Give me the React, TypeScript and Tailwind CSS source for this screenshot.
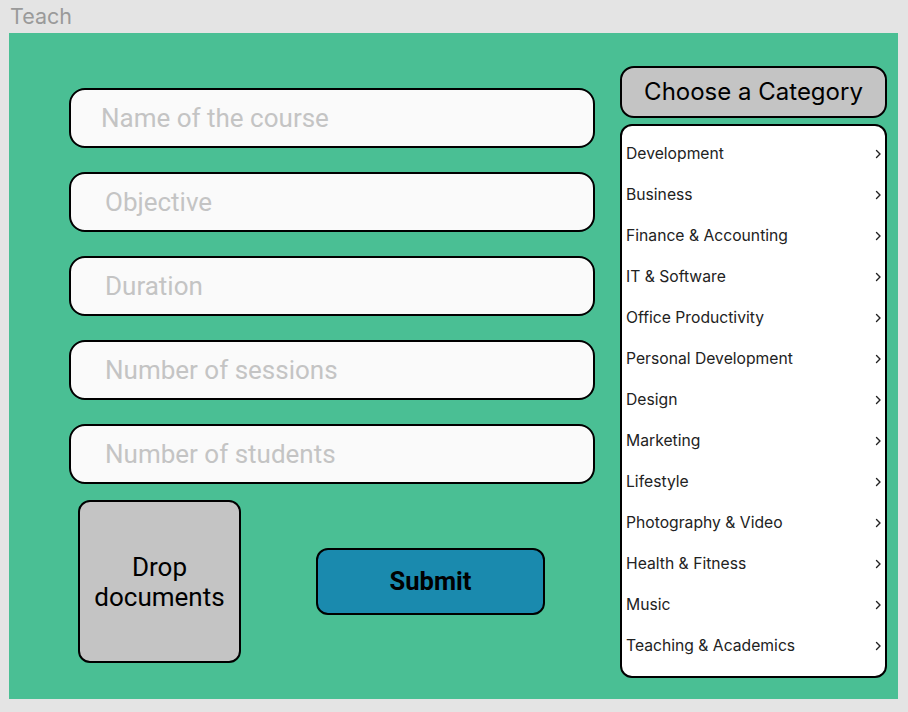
const fields = [
  { label: "Name of the course", pl: "pl-[30px]" },
  { label: "Objective", pl: "pl-[34px]" },
  { label: "Duration", pl: "pl-[34px]" },
  { label: "Number of sessions", pl: "pl-[34px]" },
  { label: "Number of students", pl: "pl-[34px]" },
];

const categories = [
  "Development",
  "Business",
  "Finance & Accounting",
  "IT & Software",
  "Office Productivity",
  "Personal Development",
  "Design",
  "Marketing",
  "Lifestyle",
  "Photography & Video",
  "Health & Fitness",
  "Music",
  "Teaching & Academics",
];

function Chevron() {
  return (
    <svg width="7" height="10" viewBox="0 0 7 10" fill="none">
      <path d="M1.5 1.5 L5 5 L1.5 8.5" stroke="#222" strokeWidth="1.4" strokeLinecap="round" strokeLinejoin="round" />
    </svg>
  );
}

export default function App() {
  return (
    <div className="w-[908px] h-[712px] bg-[#e4e4e4] overflow-hidden">
      <div className="h-[33px] pl-[10px] pt-[3px] font-['Inter',sans-serif] text-[21.5px] leading-[26px] text-[#9a9a9a]">
        Teach
      </div>
      <div className="ml-[9px] w-[889px] h-[666px] bg-[#4abf94] flex">
        <div className="w-[586px] pl-[60px] pt-[55px] flex flex-col">
          <div className="flex flex-col gap-[24px]">
            {fields.map((f) => (
              <div
                key={f.label}
                className={`h-[60px] w-[526px] rounded-[16px] border-2 border-black bg-[#fafafa] flex items-center ${f.pl} font-['Roboto',sans-serif] text-[26px] text-[#c4c4c4]`}
              >
                {f.label}
              </div>
            ))}
          </div>
          <div className="flex items-center mt-[16px]">
            <div className="ml-[9px] w-[163px] h-[163px] rounded-[12px] border-2 border-black bg-[#c4c4c4] flex items-center justify-center text-center font-['Roboto',sans-serif] text-[26px] leading-[30px] text-black">
              Drop
              <br />
              documents
            </div>
            <button className="ml-[75px] w-[229px] h-[67px] rounded-[12px] border-2 border-black bg-[#1a8aae] font-['Roboto',sans-serif] font-bold text-[25.5px] text-black">
              Submit
            </button>
          </div>
        </div>
        <div className="ml-[25px] pt-[33px] w-[267px] flex flex-col">
          <div className="h-[52px] rounded-[14px] border-2 border-black bg-[#c4c4c4] flex items-center justify-center font-['Inter',sans-serif] text-[24px] text-black">
            Choose a Category
          </div>
          <div className="mt-[6px] h-[554px] rounded-[12px] border-2 border-black bg-white pt-[7px]">
            {categories.map((c) => (
              <div
                key={c}
                className="h-[41px] flex items-center justify-between pl-[4px] pr-[3px] font-['Inter',sans-serif] text-[15.7px] text-[#222]"
              >
                <span>{c}</span>
                <Chevron />
              </div>
            ))}
          </div>
        </div>
      </div>
    </div>
  );
}
